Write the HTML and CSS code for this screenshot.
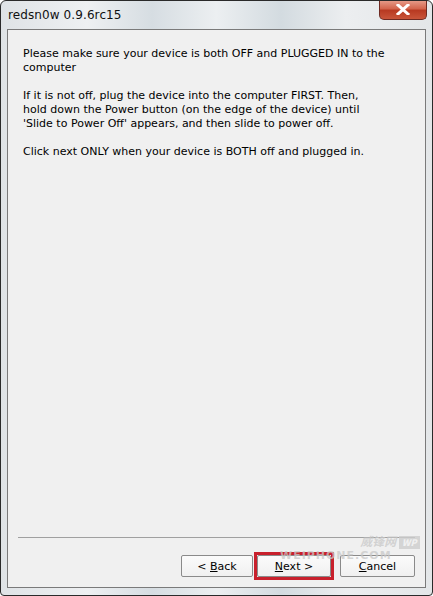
FILE: index.html
```html
<!DOCTYPE html>
<html lang="en">
<head>
  <meta charset="UTF-8">
  <title>redsn0w 0.9.6rc15</title>
  <link rel="stylesheet" href="styles.css">
</head>
<body>
  <div class="window">
    <div class="titlebar">
      <span class="title">redsn0w 0.9.6rc15</span>
      <div class="close">
        <svg width="14" height="11" viewBox="0 0 14 11"><path d="M2 1 L12 10 M12 1 L2 10" stroke="#fff" stroke-width="3" stroke-linecap="square"/></svg>
      </div>
    </div>
    <div class="panel">
      <div class="message">
        <p>Please make sure your device is both OFF and PLUGGED IN to the computer</p>
        <p>If it is not off, plug the device into the computer FIRST. Then,<br>hold down the Power button (on the edge of the device) until<br>'Slide to Power Off' appears, and then slide to power off.</p>
        <p>Click next ONLY when your device is BOTH off and plugged in.</p>
      </div>
      <div class="footer">
        <div class="watermark">
          <span class="cn">威锋网 <b>WP</b></span>
          <span class="en">WEIPHONE.COM</span>
        </div>
        <div class="buttons">
          <button class="btn">&lt; <u>B</u>ack</button>
          <span class="highlight"><button class="btn"><u>N</u>ext &gt;</button></span>
          <button class="btn"><u>C</u>ancel</button>
        </div>
      </div>
    </div>
  </div>
</body>
</html>
```

FILE: styles.css
```css
body {
  margin: 0;
  background: #fff;
  font-family: Tahoma, "DejaVu Sans", sans-serif;
}
.window {
  width: 433px;
  height: 596px;
  box-sizing: border-box;
  border: 1px solid #2a2a2a;
  border-radius: 6px 6px 4px 4px;
  background: linear-gradient(90deg, #dfe3e6 0%, #eef0f2 20%, #d6dde2 35%, #eceff1 50%, #d3dbe0 65%, #eceef0 80%, #e3e6e8 100%);
  display: flex;
  flex-direction: column;
  overflow: hidden;
}
.titlebar {
  height: 28px;
  display: flex;
  justify-content: space-between;
  align-items: flex-start;
  padding: 0 5px 0 7px;
}
.title {
  font-size: 12px;
  color: #111;
  margin-top: 7px;
  letter-spacing: 0.1px;
}
.close {
  width: 46px;
  height: 19px;
  margin-top: -1px;
  border: 1px solid #6e2a22;
  border-top: none;
  border-radius: 0 0 5px 5px;
  background: linear-gradient(#e8a08e 0%, #d4664e 45%, #b83a22 55%, #c9553a 100%);
  display: flex;
  align-items: center;
  justify-content: center;
}
.panel {
  flex: 1;
  margin: 0 6px 7px 6px;
  border: 1px solid #7a7a7a;
  background: #f0f0f0;
  display: flex;
  flex-direction: column;
}
.message {
  flex: 1;
  padding: 17px 30px 0 15px;
  font-size: 11px;
  line-height: 14px;
  color: #000;
}
.message p {
  margin: 0 0 14px 0;
}
.footer {
  position: relative;
  margin: 0 10px;
  border-top: 1px solid #a0a0a0;
  padding: 14px 0 7px 0;
}
.watermark {
  position: absolute;
  z-index: 1;
  top: -4px;
  left: 262px;
  display: flex;
  flex-direction: column;
  align-items: flex-end;
  color: rgba(200, 200, 200, 0.75);
  font-weight: bold;
  line-height: 13px;
}
.watermark .cn {
  font-size: 12px;
  font-family: "Noto Sans CJK SC", sans-serif;
  font-style: italic;
}
.watermark .cn b {
  background: rgba(205, 205, 205, 0.8);
  color: #f0f0f0;
  padding: 0 3px;
  font-size: 9px;
}
.watermark .en {
  font-size: 11px;
  margin-right: 28px;
  letter-spacing: 1px;
}
.buttons {
  display: flex;
  justify-content: flex-end;
  align-items: center;
}
.btn {
  width: 72px;
  height: 22px;
  font-family: Tahoma, "DejaVu Sans", sans-serif;
  font-size: 11px;
  color: #000;
  background: linear-gradient(#fbfbfb, #f0f0f0);
  border: 1px solid #8a8a8a;
  border-radius: 2px;
  padding: 0;
}
.highlight {
  border: 3px solid #c8202c;
  margin: 0 6px 0 1px;
  display: flex;
}
.highlight .btn {
  width: 74px;
}
.buttons > .btn:last-child {
  width: 75px;
}
```
